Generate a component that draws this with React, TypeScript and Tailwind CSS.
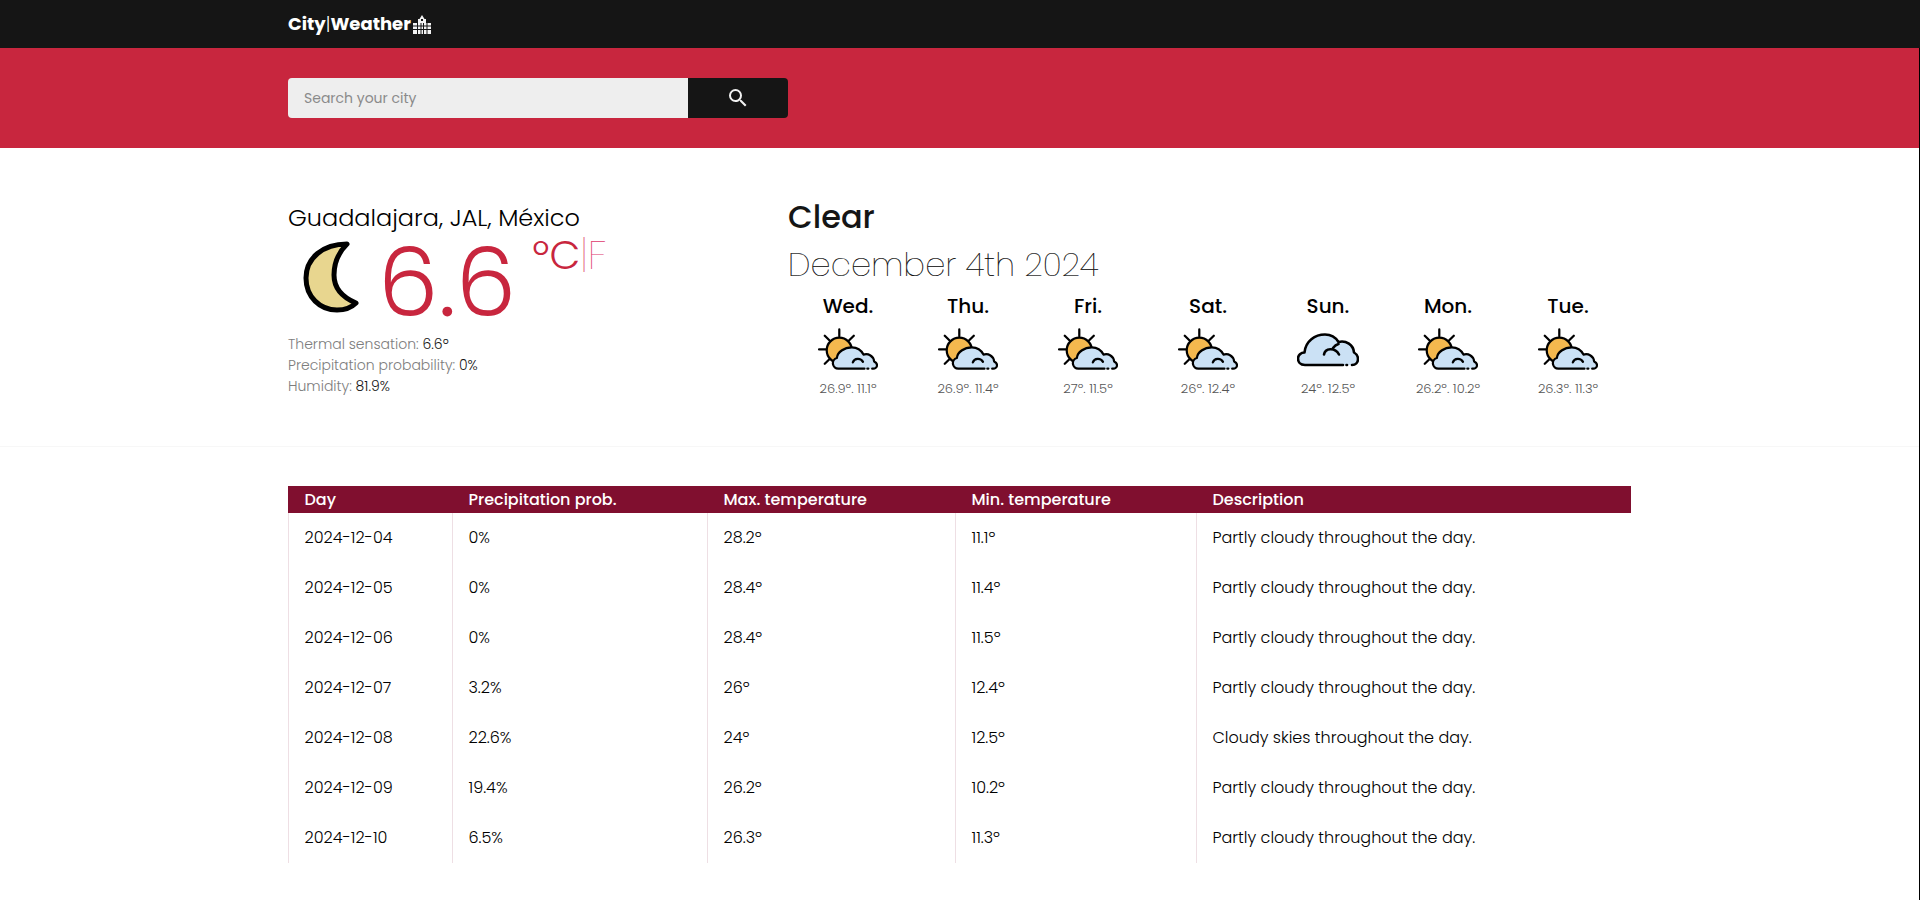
import React from "react";
import { MdSearch } from "react-icons/md";

const font = "font-['Poppins','Inter','Liberation_Sans',sans-serif]";

const SunCloud = () => (
    <svg width="60" height="42.600" viewBox="0 0 62 44" fill="none" stroke="#000" strokeWidth="2.3" strokeLinecap="round" strokeLinejoin="round">
        <path d="M22 1.500v7M7 8l5 5M37 8l-5 5M1 22h8M7 37l5-5" />
        <circle cx="22" cy="23" r="13" fill="#f4b84e" />
        <path d="M21 42a5.600 5.600 0 0 1-1.500-11C20 25 27 20 35 20c6 0 10 3.500 12 7.500 5-1.500 10.500 1.500 11 7 2 1 3 2.500 3 4 0 2-2 3.500-4 3.500z" fill="#cbe1f5" stroke="none" />
        <path d="M48 42H21a5.600 5.600 0 0 1-1.500-11C20 25 27 20 35 20c6 0 10 3.500 12 7.500 5-1.500 10.500 1.500 11 7 2 1 3 2.500 3 4 0 2-2 3.500-4 3.500h-1" />
        <path d="M51 42h1" />
        <path d="M36 35.500c1.500-4.500 8-5 10.500-.5" />
    </svg>
);

const Cloud = () => (
    <svg width="62" height="44" viewBox="0 0 62 44" fill="none" stroke="#000" strokeWidth="2.6" strokeLinecap="round" strokeLinejoin="round">
        <path d="M8 37C3 37 1 33.500 1 30.500 1 27 4 24.500 7.500 24.500 8.500 13 18 6.500 28 6.500c6 0 11 3.500 13.500 7.500 7.500-2 15 3 15.500 10.500 2.500 1.500 4 4 4 6.500 0 3.500-2.500 6-6 6z" fill="#cbe1f5" stroke="none" />
        <path d="M46 37H8C3 37 1 33.500 1 30.500 1 27 4 24.500 7.500 24.500 8.500 13 18 6.500 28 6.500c6 0 11 3.500 13.500 7.500 7.500-2 15 3 15.500 10.500 2.500 1.500 4 4 4 6.500 0 3.500-2.500 6-6 6" />
        <path d="M49.500 37h.5" />
        <path d="M27 26.500c1-6.500 11-7.500 15 0" />
        <path d="M36 20c1.500-2 3.500-3.500 5.500-4" />
    </svg>
);

const Moon = () => (
    <svg width="56" height="72" viewBox="0 0 56 72">
        <path d="M44 3C20 3 3 17 3 37c0 19 14 32 31 32 7 0 14-2 19-7-12-5-22-14-22-28 0-12 5-23 13-31z" fill="#e8d68f" stroke="#000" strokeWidth="5" strokeLinejoin="round" />
    </svg>
);

const Buildings = () => (
    <svg width="18" height="19" viewBox="0 0 18 19" fill="#f2f2f2">
        <path d="M0 8h5V19H0zM5 4h1.500L9 0l2.500 4H13v15H5zM13 8h5v11h-5z" />
        <path d="M0 11h18M0 14.500h18M4.500 8v11M8 8v11M10.500 8v11M14 8v11" stroke="#151515" strokeWidth="1" />
        <path d="M8 4h2v2H8z" fill="#151515" />
    </svg>
);

const forecast = [
    { day: "Wed.", temps: "26.9º. 11.1º", cloud: false },
    { day: "Thu.", temps: "26.9º. 11.4º", cloud: false },
    { day: "Fri.", temps: "27º. 11.5º", cloud: false },
    { day: "Sat.", temps: "26º. 12.4º", cloud: false },
    { day: "Sun.", temps: "24º. 12.5º", cloud: true },
    { day: "Mon.", temps: "26.2º. 10.2º", cloud: false },
    { day: "Tue.", temps: "26.3º. 11.3º", cloud: false },
];

const rows = [
    ["2024-12-04", "0%", "28.2º", "11.1º", "Partly cloudy throughout the day."],
    ["2024-12-05", "0%", "28.4º", "11.4º", "Partly cloudy throughout the day."],
    ["2024-12-06", "0%", "28.4º", "11.5º", "Partly cloudy throughout the day."],
    ["2024-12-07", "3.2%", "26º", "12.4º", "Partly cloudy throughout the day."],
    ["2024-12-08", "22.6%", "24º", "12.5º", "Cloudy skies throughout the day."],
    ["2024-12-09", "19.4%", "26.2º", "10.2º", "Partly cloudy throughout the day."],
    ["2024-12-10", "6.5%", "26.3º", "11.3º", "Partly cloudy throughout the day."],
];

const columns = "grid grid-cols-[164px_255px_248px_241px_1fr]";

const App = () => {
    return (
        <div className={font + " bg-white text-[#151515]"}>
            <header className="h-12 bg-[#151515] pl-[288px] flex items-center gap-0.5">
                <span className="text-lg font-bold text-white">
                    City<span className="font-light">|</span>Weather
                </span>
                <Buildings />
            </header>
            <main className="min-h-[852px] border-r border-black">
                <div className="h-[100px] bg-[#c8263e] pl-[288px] flex items-center">
                    <div className="w-[500px] h-10 flex rounded overflow-hidden">
                        <div className="w-[400px] bg-[#eeeeee] pl-4 flex items-center text-sm text-[#8a8a8a]">Search your city</div>
                        <div className="w-[100px] bg-[#151515] flex items-center justify-center">
                            <MdSearch size={24} color="#f2f2f2" />
                        </div>
                    </div>
                </div>
                <section className="h-[299px] border-b border-[#f7f7f7] pl-[288px] pt-[45px] flex">
                    <div className="w-[500px] pt-[9px]">
                        <h2 className="text-2xl leading-8 font-light text-black">Guadalajara, JAL, México</h2>
                        <div className="flex h-[88px] mt-[5px]">
                            <div className="pl-[15px] pt-[2px] w-[90px]">
                                <Moon />
                            </div>
                            <span className="text-[96px] leading-[88px] font-light text-[#c8263e]">6.6</span>
                            <div className="pl-4 -mt-[4px] text-[40px] leading-[40px] font-light text-[#c8263e]">
                                ºC<span className="font-extralight text-[#de3a6c]">|F</span>
                            </div>
                        </div>
                        <div className="mt-[7px] text-sm leading-[21px] font-light text-[#7d7d7d]">
                            <div>Thermal sensation: <span className="text-[#151515]">6.6º</span></div>
                            <div>Precipitation probability: <span className="text-[#151515]">0%</span></div>
                            <div>Humidity: <span className="text-[#151515]">81.9%</span></div>
                        </div>
                    </div>
                    <div className="w-[840px]">
                        <h1 className="text-[32px] leading-[48px] font-medium">Clear</h1>
                        <h3 className="text-[32px] leading-[48px] font-extralight tracking-[0.14px] text-black [-webkit-text-stroke:0.2px_black]">December 4th 2024</h3>
                        <div className="grid grid-cols-7 mt-[2px]">
                            {forecast.map((item) => (
                                <div key={item.day} className="flex flex-col items-center">
                                    <span className="text-xl leading-[30px] font-medium text-black">{item.day}</span>
                                    <div className="mt-[7px] h-[43px]">{item.cloud ? <Cloud /> : <SunCloud />}</div>
                                    <span className="mt-[8px] text-[13px] font-light text-[#555555]">{item.temps}</span>
                                </div>
                            ))}
                        </div>
                    </div>
                </section>
                <div className="pl-[288px] w-[1631px] pt-[39px]">
                    <div className={columns + " h-[27px] items-center bg-[#800f2f] text-white text-base font-medium"}>
                        {["Day", "Precipitation prob.", "Max. temperature", "Min. temperature", "Description"].map((title) => (
                            <div key={title} className="pl-[15.5px] border-l border-transparent">{title}</div>
                        ))}
                    </div>
                    {rows.map((row) => (
                        <div key={row[0]} className={columns + " h-[50px] text-base font-light text-black"}>
                            {row.map((cell, i) => (
                                <div key={i} className="pl-[15.5px] flex items-center border-l border-[#eedfe4]">{cell}</div>
                            ))}
                        </div>
                    ))}
                </div>
            </main>
        </div>
    );
};

export default App;
